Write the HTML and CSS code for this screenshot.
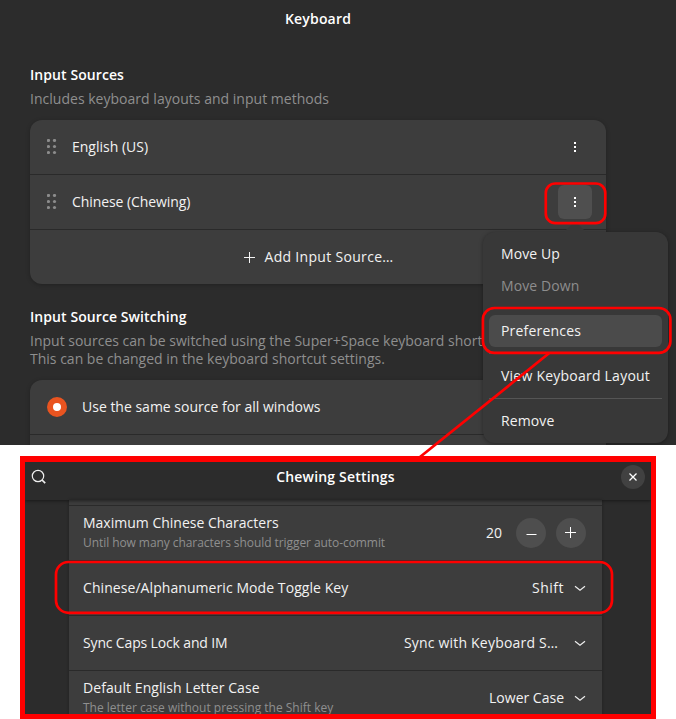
FILE: index.html
```html
<!DOCTYPE html>
<html lang="en">
<head>
<meta charset="utf-8">
<title>Keyboard</title>
<link rel="stylesheet" href="styles.css">
</head>
<body>
<svg class="defs" width="0" height="0">
  <symbol id="grip" viewBox="0 0 10 16"><g fill="#8c8c8c"><circle cx="1.5" cy="1.5" r="1.6"/><circle cx="7.5" cy="1.5" r="1.6"/><circle cx="1.5" cy="7.5" r="1.6"/><circle cx="7.5" cy="7.5" r="1.6"/><circle cx="1.5" cy="13.5" r="1.6"/><circle cx="7.5" cy="13.5" r="1.6"/></g></symbol>
  <symbol id="more" viewBox="0 0 2 10"><path fill="#fff" d="M0 0h2v2H0zM0 4h2v2H0zM0 8h2v2H0z"/></symbol>
  <symbol id="chevron" viewBox="0 0 12 8"><path fill="none" stroke="#eee" stroke-width="1.2" d="M1 2.2l5 4 5-4"/></symbol>
</svg>
<main class="keyboard">
  <h1 class="title">Keyboard</h1>
  <section class="sources">
    <h2>Input Sources</h2>
    <p class="desc includes">Includes keyboard layouts and input methods</p>
    <div class="card">
      <div class="row">
        <svg class="grip"><use href="#grip"/></svg><span class="label">English (US)</span>
        <button class="menu-btn"><svg><use href="#more"/></svg></button>
      </div>
      <div class="row">
        <svg class="grip"><use href="#grip"/></svg><span class="label chewing">Chinese (Chewing)</span>
        <button class="menu-btn active"><svg><use href="#more"/></svg></button>
      </div>
      <div class="row add">
        <svg width="11" height="11"><path stroke="#f4f4f4" d="M5.5 0v11M0 5.5h11"/></svg><span class="add-text">Add Input Source…</span>
      </div>
    </div>
  </section>
  <section class="switching">
    <h2>Input Source Switching</h2>
    <p class="desc">Input sources can be switched using the Super+Space keyboard shortcut.<br>This can be changed in the keyboard shortcut settings.</p>
    <div class="card">
      <div class="row"><span class="radio"></span><span>Use the same source for all windows</span></div>
      <div class="row"></div>
    </div>
  </section>
  <div class="popover">
    <div class="item">Move Up</div>
    <div class="item disabled">Move Down</div>
    <hr>
    <div class="item hover">Preferences</div>
    <hr>
    <div class="item layout">View Keyboard Layout</div>
    <hr>
    <div class="item">Remove</div>
  </div>
</main>
<section class="dialog">
  <header>
    <svg class="search" width="16" height="16"><g fill="none" stroke="#eee" stroke-width="1.2"><circle cx="7" cy="7" r="5.7"/><path d="M11 11l3.2 3.2" stroke-width="1.7"/></g></svg>
    <h2>Chewing Settings</h2>
    <button class="close"><svg width="8" height="8"><path stroke="#fff" stroke-width="1.3" d="M.5.5l7 7M7.5.5l-7 7"/></svg></button>
  </header>
  <div class="settings">
    <div class="setting sliver"></div>
    <div class="setting">
      <div class="text double"><span>Maximum Chinese Characters</span><small class="until">Until how many characters should trigger auto-commit</small></div>
      <span class="value">20</span>
      <button class="step"><svg width="11" height="11"><path stroke="#fff" d="M.5 6.5h10"/></svg></button>
      <button class="step plus"><svg width="11" height="11"><path stroke="#fff" d="M5.5 0v11M0 5.5h11"/></svg></button>
    </div>
    <div class="setting">
      <div class="text toggle-key">Chinese/Alphanumeric Mode Toggle Key</div>
      <span class="choice shift">Shift</span><svg class="chevron"><use href="#chevron"/></svg>
    </div>
    <div class="setting">
      <div class="text caps">Sync Caps Lock and IM</div>
      <span class="choice sync">Sync with Keyboard S…</span><svg class="chevron"><use href="#chevron"/></svg>
    </div>
    <div class="setting">
      <div class="text double"><span class="letter-case">Default English Letter Case</span><small>The letter case without pressing the Shift key</small></div>
      <span class="choice">Lower Case</span><svg class="chevron"><use href="#chevron"/></svg>
    </div>
  </div>
</section>
<svg class="annotations" width="676" height="719">
  <g fill="none" stroke="#f00" stroke-width="2.7">
    <rect x="545.8" y="183.5" width="59.5" height="39.7" rx="9.5"/>
    <rect x="482.9" y="308" width="187.5" height="44.8" rx="11.5"/>
    <path d="M549 353.3L420 457"/>
    <rect x="56" y="562" width="556" height="50.8" rx="12.5"/>
  </g>
</svg>
</body>
</html>
```
FILE: styles.css
```css
* { box-sizing: border-box; }
body {
  margin: 0;
  position: relative;
  width: 676px;
  height: 719px;
  overflow: hidden;
  background: #fff;
  color: #f2f2f2;
  font: 14px/18px "Open Sans", "Noto Sans", sans-serif;
}
h1, h2, p { margin: 0; font-size: 14px; line-height: 18px; }
h1, h2 { font-weight: 650; color: #fff; letter-spacing: .08px; }
button { border: 0; padding: 0; margin: 0; background: none; display: flex; align-items: center; justify-content: center; }
svg { display: block; flex: none; }
.defs { position: absolute; }

.keyboard { position: relative; height: 445px; background: #2c2c2c; overflow: hidden; padding: 10px 70px 0 30px; }
.keyboard .title { width: 576px; text-align: center; letter-spacing: .18px; }
.sources { margin-top: 38px; }
.switching { margin-top: 24px; }
.desc { margin-top: 6px; color: #8f8f8f; white-space: nowrap; }
.includes { letter-spacing: .02px; }
.card { margin-top: 12px; border-radius: 12px; background: #3d3d3d; box-shadow: 0 1px 4px rgba(0, 0, 0, .25); }
.row { height: 55px; display: flex; align-items: center; padding: 0 14px 0 17px; border-bottom: 1px solid #2a2a2a; }
.row:last-child { border-bottom: 0; height: 54px; }
.grip { width: 10px; height: 16px; margin-right: 15px; }
.label { flex: 1; }
.chewing { letter-spacing: -.08px; }
.menu-btn { width: 34px; height: 34px; border-radius: 6px; }
.menu-btn svg { width: 2px; height: 10px; }
.menu-btn.active { background: #4f4f4f; }
.add { justify-content: center; gap: 9px; padding: 0 0 0 2px; }
.add-text { letter-spacing: .31px; }
.radio { width: 20px; height: 20px; margin-right: 15px; border-radius: 50%; border: 6px solid #e95420; background: #fff; }

.popover { position: absolute; left: 483px; top: 232px; width: 185px; height: 211px; padding: 6px; border-radius: 12px; background: #383838; box-shadow: 0 1px 4px rgba(0, 0, 0, .35); }
.popover::before { content: ""; position: absolute; left: 81px; top: -11px; width: 22px; height: 11px; background: #383838; clip-path: polygon(50% 0, 100% 100%, 0 100%); }
.item { height: 32px; padding: 0 12px; line-height: 32px; border-radius: 6px; white-space: nowrap; letter-spacing: .1px; }
.item.layout { letter-spacing: .23px; }
.disabled { color: #8d8d8d; }
.hover { background: #4b4b4b; letter-spacing: .2px; }
.popover hr { height: 1px; margin: 6px 0; border: 0; background: #555; }

.dialog { width: 636px; height: 263px; margin: 11px 0 0 20px; border: 5px solid #f00; border-top-width: 6px; background: #2c2c2c; overflow: hidden; }
.dialog header { height: 38px; display: flex; align-items: flex-start; padding: 3px 6px 0 6px; box-shadow: 0 1px 3px rgba(0, 0, 0, .45); position: relative; }
.search { margin-top: 4px; }
.dialog h2 { flex: 1; text-align: center; padding-top: 3px; padding-left: 3px; letter-spacing: .18px; }
.close { width: 24px; height: 24px; border-radius: 50%; background: #414141; }
.settings { margin: 0 49px 0 44px; background: #3d3d3d; box-shadow: 0 0 3px rgba(0, 0, 0, .3); }
.setting { height: 55px; display: flex; align-items: center; padding: 0 16px 0 14px; border-bottom: 1px solid #2a2a2a; white-space: nowrap; }
.setting.sliver { height: 6px; }
.text { flex: 1; display: flex; flex-direction: column; }
.text.double { padding-bottom: 2px; }
.text small { font-size: 12px; line-height: 16px; margin-top: 3px; color: #8f8f8f; }
.until { letter-spacing: -.07px; }
.toggle-key { letter-spacing: .07px; }
.caps { letter-spacing: -.15px; }
.letter-case { letter-spacing: .07px; }
.shift { letter-spacing: .5px; }
.sync { letter-spacing: .2px; margin-right: 6px; }
.value { margin-right: 4px; }
.step { width: 30px; height: 30px; margin-left: 10px; border-radius: 50%; background: #4e4e4e; }
.plus { padding: 0 1px 1px 0; }
.chevron { width: 12px; height: 8px; margin-left: 10px; }

.annotations { position: absolute; left: 0; top: 0; }
```
